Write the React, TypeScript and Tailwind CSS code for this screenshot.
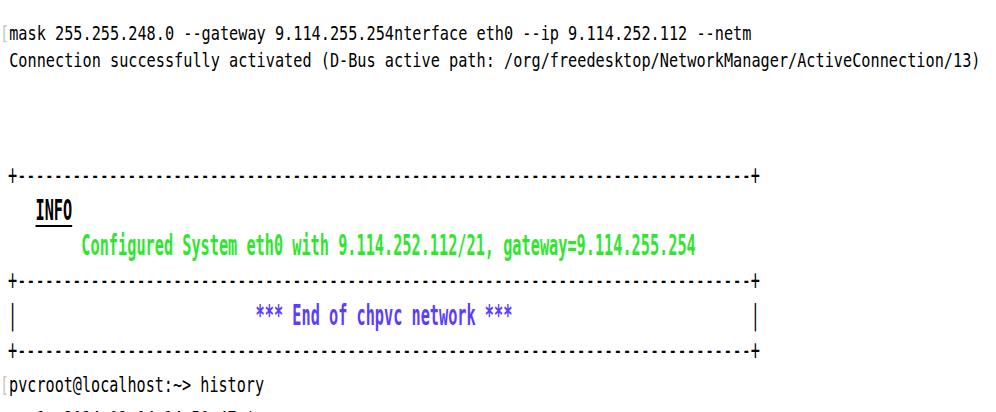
const dash = '-'.repeat(80)
const border = '+' + dash + '+'

function Row({ children, className = '' }: { children: React.ReactNode; className?: string }) {
  return <div className={`h-[35px] leading-[35px] ${className}`}>{children}</div>
}

export default function App() {
  return (
    <div className="w-[996px] h-[412px] overflow-hidden bg-white text-black font-['DejaVu_Sans_Mono',monospace] whitespace-pre">
      {/* previous command output */}
      <div className="pt-[20px] origin-left scale-x-[0.761] w-[1400px] text-[20px]">
        <div className="h-[27px] leading-[27px]">
          <span className="text-[#c8c8c8]">[</span>mask 255.255.248.0 --gateway 9.114.255.254nterface eth0 --ip 9.114.252.112 --netm
        </div>
        <div className="h-[27px] leading-[27px]">
          {' '}Connection successfully activated (D-Bus active path: /org/freedesktop/NetworkManager/ActiveConnection/13)
        </div>
      </div>

      {/* chpvc summary box */}
      <div className="mt-[84px] ml-[8px] origin-left scale-x-[0.544] w-[2000px] text-[28px]">
        <Row>{border}</Row>
        <Row>
          {'   '}
          <span className="font-bold underline underline-offset-[5px] decoration-2">INFO</span>
        </Row>
        <Row className="font-bold text-[#2ee62e]">
          {'        '}Configured System eth0 with 9.114.252.112/21, gateway=9.114.255.254
        </Row>
        <Row>{border}</Row>
        <Row>
          |{' '.repeat(26)}
          <span className="font-bold text-[#5b3dff]">*** End of chpvc network ***</span>
          {' '.repeat(26)}|
        </Row>
        <Row>{border}</Row>
      </div>

      {/* prompt */}
      <div className="origin-left scale-x-[0.72] w-[1400px] text-[21px]">
        <div className="h-[35px] leading-[35px]">
          <span className="text-[#c8c8c8]">[</span>pvcroot@localhost:~&gt; history
        </div>
        <div className="h-[35px] leading-[35px]">
          {'    1  2024-03-04 14:50:47 ip a'}
        </div>
      </div>
    </div>
  )
}
